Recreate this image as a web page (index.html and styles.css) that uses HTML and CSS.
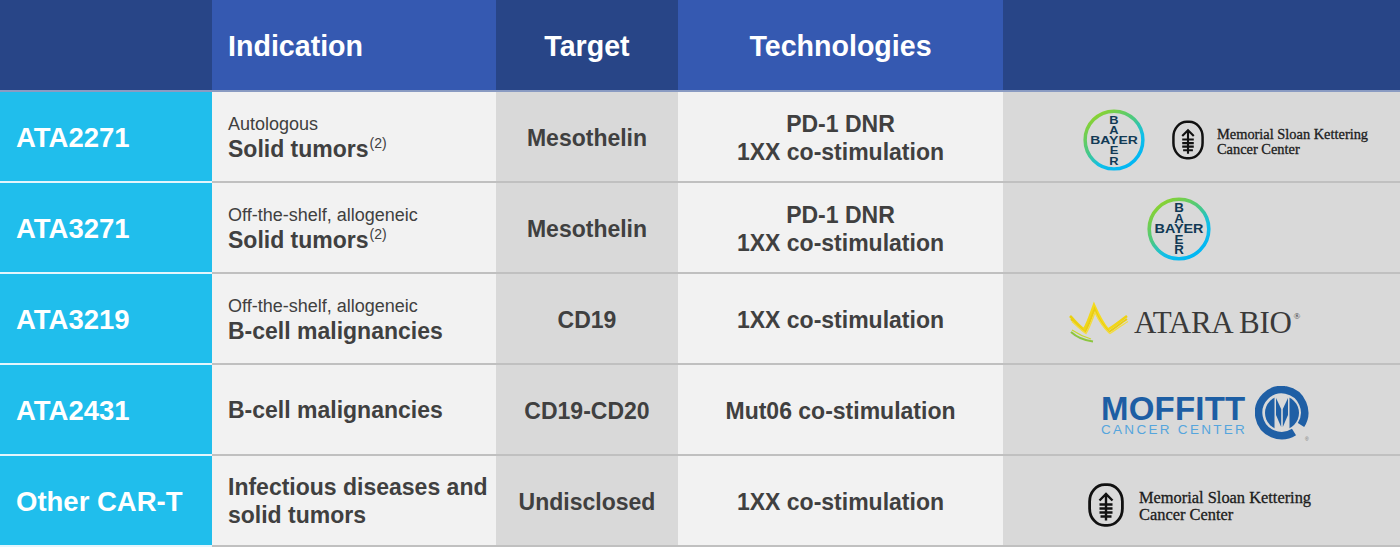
FILE: index.html
```html
<!DOCTYPE html>
<html lang="en">
<head>
<meta charset="utf-8">
<title>CAR-T pipeline</title>
<link rel="stylesheet" href="styles.css">
</head>
<body>
<svg width="0" height="0" class="defs-holder">
  <defs>
    <linearGradient id="bayerRing" x1="0.15" y1="0.05" x2="0.8" y2="0.95">
      <stop offset="0" stop-color="#8fd32a"/>
      <stop offset="0.45" stop-color="#45c88a"/>
      <stop offset="0.7" stop-color="#10bfe8"/>
      <stop offset="1" stop-color="#00b6f5"/>
    </linearGradient>
    <linearGradient id="crownG" x1="0" y1="0" x2="1" y2="0">
      <stop offset="0" stop-color="#e8cf12"/>
      <stop offset="0.5" stop-color="#f6dc1e"/>
      <stop offset="1" stop-color="#efd110"/>
    </linearGradient>
    <clipPath id="moffClip"><circle cx="27" cy="27" r="17"/></clipPath>
  </defs>
</svg>
<div class="table">
  <div class="hd dark"></div>
  <div class="hd light left">Indication</div>
  <div class="hd dark center">Target</div>
  <div class="hd light center">Technologies</div>
  <div class="hd dark"></div>

  <!-- Row 1 -->
  <div class="cell name">ATA2271</div>
  <div class="cell ind"><div><div class="small">Autologous</div><div class="strong">Solid tumors<sup class="note">(2)</sup></div></div></div>
  <div class="cell tgt">Mesothelin</div>
  <div class="cell tech">PD-1 DNR<br>1XX co-stimulation</div>
  <div class="cell logos r1">
    <svg class="bayer b62" viewBox="0 0 64 64">
      <circle cx="32" cy="32" r="29.8" fill="none" stroke="url(#bayerRing)" stroke-width="3.6"/>
      <text x="32" y="36.4" class="bay" text-anchor="middle" textLength="49" lengthAdjust="spacingAndGlyphs">BAYER</text>
      <text x="32" y="15.4" class="bay" text-anchor="middle" textLength="9.6" lengthAdjust="spacingAndGlyphs">B</text>
      <text x="32" y="25.9" class="bay" text-anchor="middle" textLength="9.6" lengthAdjust="spacingAndGlyphs">A</text>
      <text x="32" y="46.9" class="bay" text-anchor="middle" textLength="9" lengthAdjust="spacingAndGlyphs">E</text>
      <text x="32" y="57.4" class="bay" text-anchor="middle" textLength="9.6" lengthAdjust="spacingAndGlyphs">R</text>
    </svg>
    <svg class="msk-icon i1" viewBox="0 0 36 44">
      <rect x="1.6" y="1.6" width="32.8" height="40.8" rx="15" ry="17" fill="none" stroke="#111" stroke-width="2.8"/>
      <path d="M18 10.5 V37.5 M11.5 17.5 L18 11 L24.5 17.5 M11.5 21.5 H24.5 M11.5 25.5 H24.5 M11.5 29.5 H24.5 M12.5 33.5 H23.5" fill="none" stroke="#111" stroke-width="2.4" stroke-linecap="butt"/>
    </svg>
    <div class="msk-text t1">Memorial Sloan Kettering<br>Cancer Center</div>
  </div>

  <!-- Row 2 -->
  <div class="cell name">ATA3271</div>
  <div class="cell ind"><div><div class="small">Off-the-shelf, allogeneic</div><div class="strong">Solid tumors<sup class="note">(2)</sup></div></div></div>
  <div class="cell tgt">Mesothelin</div>
  <div class="cell tech">PD-1 DNR<br>1XX co-stimulation</div>
  <div class="cell logos r2">
    <svg class="bayer b64" viewBox="0 0 64 64">
      <circle cx="32" cy="32" r="29.8" fill="none" stroke="url(#bayerRing)" stroke-width="3.6"/>
      <text x="32" y="36.4" class="bay" text-anchor="middle" textLength="49" lengthAdjust="spacingAndGlyphs">BAYER</text>
      <text x="32" y="15.4" class="bay" text-anchor="middle" textLength="9.6" lengthAdjust="spacingAndGlyphs">B</text>
      <text x="32" y="25.9" class="bay" text-anchor="middle" textLength="9.6" lengthAdjust="spacingAndGlyphs">A</text>
      <text x="32" y="46.9" class="bay" text-anchor="middle" textLength="9" lengthAdjust="spacingAndGlyphs">E</text>
      <text x="32" y="57.4" class="bay" text-anchor="middle" textLength="9.6" lengthAdjust="spacingAndGlyphs">R</text>
    </svg>
  </div>

  <!-- Row 3 -->
  <div class="cell name">ATA3219</div>
  <div class="cell ind"><div><div class="small">Off-the-shelf, allogeneic</div><div class="strong">B-cell malignancies</div></div></div>
  <div class="cell tgt">CD19</div>
  <div class="cell tech">1XX co-stimulation</div>
  <div class="cell logos r3">
    <svg class="crown" viewBox="0 0 64 44">
      <path d="M3 16 C8 21 12 26 17 29.5 C21 23 24 13 27 5 C31 14 36 24 41 29.5 C47 26 53 21 60 16" fill="none" stroke="url(#crownG)" stroke-width="2.6"/>
      <path d="M4 19 C9 24 13 28 18 32 C22 25 25 16 27.5 9 C31 18 36 26 42 32 C48 28 54 23 60 19" fill="none" stroke="#eacd12" stroke-width="2"/>
      <path d="M5 21.5 C10 26 14 30 19 33.5 C23 27 25.5 19 28 12.5 C31.5 20 36.5 28 43 33.5 C49 29.5 55 25 61 21.5" fill="none" stroke="#f3dc40" stroke-width="1.4"/>
      <path d="M4 32 C10 37.5 18 40.5 26 41.5" fill="none" stroke="#8cc63f" stroke-width="2"/>
      <path d="M5 30 C11 34 17 37 24 39" fill="none" stroke="#c6d82e" stroke-width="1.2"/>
    </svg>
    <div class="atara">ATARA BIO<sup class="reg">®</sup></div>
  </div>

  <!-- Row 4 -->
  <div class="cell name">ATA2431</div>
  <div class="cell ind"><div class="strong">B-cell malignancies</div></div>
  <div class="cell tgt">CD19-CD20</div>
  <div class="cell tech">Mut06 co-stimulation</div>
  <div class="cell logos r4">
    <div class="moffitt">
      <div class="moff-name">MOFFITT</div>
      <div class="moff-sub">CANCER CENTER</div>
    </div>
    <svg class="moff-mark" viewBox="0 0 56 56">
      <path d="M39 46 A23 23 0 1 1 46 39" fill="none" stroke="#1f5fa5" stroke-width="7.5"/>
      <g clip-path="url(#moffClip)">
        <polygon points="9,46 9,10 19.5,10 19.5,46" fill="#1f5fa5"/>
        <polygon points="34.5,46 34.5,10 45,10 45,46" fill="#1f5fa5"/>
        <polygon points="21,12 26.2,23 26.2,41 21,29" fill="#1f5fa5"/>
        <polygon points="33,12 27.8,23 27.8,41 33,29" fill="#1f5fa5"/>
      </g>
      <text x="50" y="55" class="moff-r">®</text>
    </svg>
  </div>

  <!-- Row 5 -->
  <div class="cell name">Other CAR-T</div>
  <div class="cell ind"><div class="strong two">Infectious diseases and<br>solid tumors</div></div>
  <div class="cell tgt">Undisclosed</div>
  <div class="cell tech">1XX co-stimulation</div>
  <div class="cell logos r5">
    <svg class="msk-icon i5" viewBox="0 0 36 44">
      <rect x="1.6" y="1.6" width="32.8" height="40.8" rx="15" ry="17" fill="none" stroke="#111" stroke-width="2.8"/>
      <path d="M18 10.5 V37.5 M11.5 17.5 L18 11 L24.5 17.5 M11.5 21.5 H24.5 M11.5 25.5 H24.5 M11.5 29.5 H24.5 M12.5 33.5 H23.5" fill="none" stroke="#111" stroke-width="2.4" stroke-linecap="butt"/>
    </svg>
    <div class="msk-text t5">Memorial Sloan Kettering<br>Cancer Center</div>
  </div>
</div>
</body>
</html>
```

FILE: styles.css
```css
html, body {
  margin: 0;
  padding: 0;
  background: #ffffff;
}

body {
  font-family: "Liberation Sans", Arial, sans-serif;
  color: #404040;
}

.defs-holder {
  position: absolute;
  width: 0;
  height: 0;
}

.table {
  display: grid;
  grid-template-columns: 212px 284px 182px 325px 397px;
  grid-template-rows: 92px repeat(5, 91px);
  width: 1400px;
}

.hd {
  box-sizing: border-box;
  border-bottom: 2px solid #8a9bc2;
  color: #ffffff;
  font-weight: bold;
  font-size: 28.6px;
  display: flex;
  align-items: center;
  padding-top: 2px;
}

.hd.dark { background: #284587; }
.hd.light { background: #3559b1; }
.hd.left { padding-left: 16px; }
.hd.center { justify-content: center; }

.cell {
  box-sizing: border-box;
  border-bottom: 2px solid #c0c0c0;
  display: flex;
  align-items: center;
}

.name {
  background: #20beec;
  border-bottom-color: #e4f5fc;
  color: #ffffff;
  font-weight: bold;
  font-size: 27.5px;
  padding-left: 16px;
  padding-top: 2px;
}

.ind {
  background: #f2f2f2;
  padding-left: 16px;
}

.small {
  font-size: 18px;
  line-height: 24px;
  color: #404040;
}

.strong {
  font-size: 23px;
  font-weight: bold;
  line-height: 26px;
  color: #404040;
}

.strong.two {
  line-height: 28px;
}

.note {
  font-size: 14px;
  font-weight: normal;
  vertical-align: 9px;
  line-height: 0;
  margin-left: 1px;
}

.tgt {
  background: #d9d9d9;
  justify-content: center;
  font-size: 23px;
  font-weight: bold;
  padding-top: 3px;
}

.tech {
  background: #f2f2f2;
  justify-content: center;
  text-align: center;
  font-size: 23px;
  font-weight: bold;
  line-height: 28px;
  padding-top: 2px;
}

.logos {
  background: #d9d9d9;
}

.r1 { padding-left: 80px; }
.r2 { padding-left: 144px; }
.r3 { padding-left: 64px; padding-top: 6px; }
.r4 { padding-left: 98px; }
.r5 { padding-left: 85px; }

.bayer { display: block; }
.b62 { width: 62px; height: 62px; margin-top: 6px; }
.b64 { width: 64px; height: 64px; margin-top: 2px; }

.bay {
  font-family: "Liberation Sans", Arial, sans-serif;
  font-weight: bold;
  font-size: 12.2px;
  fill: #123a55;
}

.msk-icon { display: block; }
.i1 { width: 32px; height: 40px; margin-left: 27px; margin-top: 6px; }
.i5 { width: 36px; height: 44px; margin-top: 9px; }

.msk-text {
  font-family: "Liberation Serif", "Times New Roman", serif;
  color: #1c1c1c;
  -webkit-text-stroke: 0.3px #1c1c1c;
}

.t1 {
  font-size: 14.4px;
  line-height: 15.5px;
  margin-left: 13px;
  margin-top: 11px;
}

.t5 {
  font-size: 16.4px;
  line-height: 17px;
  margin-left: 15px;
  margin-top: 11px;
}

.crown {
  display: block;
  width: 64px;
  height: 44px;
}

.atara {
  font-family: "Liberation Serif", "Times New Roman", serif;
  font-size: 31px;
  color: #3a3a3a;
  margin-left: 3px;
  letter-spacing: -0.3px;
  margin-top: 2px;
}

.reg {
  font-size: 9px;
  vertical-align: 14px;
  line-height: 0;
  margin-left: 2px;
}

.moffitt {
  display: flex;
  flex-direction: column;
  margin-top: 12px;
}

.moff-name {
  font-weight: bold;
  font-size: 33px;
  line-height: 27px;
  color: #1d5ea4;
  letter-spacing: 0.2px;
}

.moff-sub {
  font-size: 13.5px;
  line-height: 14px;
  letter-spacing: 2.3px;
  color: #55a5dd;
  margin-top: 1px;
}

.moff-mark {
  display: block;
  width: 56px;
  height: 56px;
  margin-left: 8px;
  margin-top: 8px;
}

.moff-r {
  font-family: "Liberation Sans", Arial, sans-serif;
  font-size: 5px;
  fill: #777;
}
```
